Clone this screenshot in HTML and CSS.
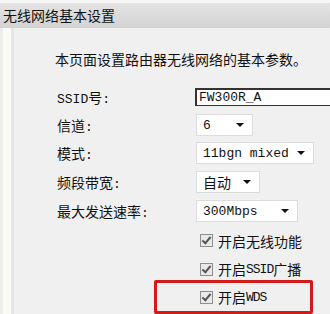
FILE: index.html
```html
<!DOCTYPE html>
<html lang="zh-CN">
<head>
    <meta charset="UTF-8">
    <title>无线网络基本设置</title>
    <link rel="stylesheet" href="styles.css">
</head>
<body>
    <div class="title">无线网络基本设置</div>

    <div class="panel">
        <div class="strip"></div>
        <div class="content">
            <p class="intro">本页面设置路由器无线网络的基本参数。</p>

            <div class="form">
                <label><span class="en">SSID</span>号<span class="en">:</span></label>
                <div><input class="text en" type="text" value="FW300R_A"></div>

                <label>信道<span class="en">:</span></label>
                <div><span class="select w-chan"><span class="en">6</span><i class="arrow"></i></span></div>

                <label>模式<span class="en">:</span></label>
                <div><span class="select w-mode"><span class="en">11bgn mixed</span><i class="arrow"></i></span></div>

                <label>频段带宽<span class="en">:</span></label>
                <div><span class="select w-band">自动<i class="arrow"></i></span></div>

                <label>最大发送速率<span class="en">:</span></label>
                <div><span class="select w-rate"><span class="en">300Mbps</span><i class="arrow"></i></span></div>

                <div class="check"><span class="box"></span>开启无线功能</div>
                <div class="check"><span class="box"></span>开启<span class="en narrow">SSID</span>广播</div>
                <div class="check"><span class="box"></span>开启<span class="en narrow">WDS</span></div>
            </div>
        </div>
    </div>

    <!-- 标注框 -->
    <div class="mark"></div>
</body>
</html>
```

FILE: styles.css
```css
body {
    margin: 0;
    width: 330px;
    height: 314px;
    overflow: hidden;
    position: relative;
    background: #f7f7f7;
    color: #111;
    font-family: "Noto Sans CJK SC", sans-serif;
    font-size: 14px;
}
.en {
    font-family: "Liberation Mono", monospace;
    font-size: 13px;
}
.title {
    margin-top: 3px;
    height: 25px;
    line-height: 25px;
    padding-left: 3px;
    background: linear-gradient(#e3e3e3, #d3d3d3);
}
.panel {
    display: flex;
    height: 286px;
}
.strip {
    flex: none;
    width: 14px;
    background: linear-gradient(to right, #ececec 0 3px, #fbfbf5 3px 11px, #e6e4ef 11px 14px);
}
.content {
    flex: 1;
    min-width: 0;
    background: #f0f0f0;
    padding-left: 41px;
}
.intro {
    margin: 21px 0 0;
    line-height: 20px;
    white-space: nowrap;
}
.form {
    display: grid;
    grid-template-columns: 140px 1fr;
    grid-template-rows: 29px 28px 28px 29px 30px 29px 28px 28px;
    margin-top: 13px;
    align-items: center;
}
.form label {
    padding-left: 2px;
}
.text {
    display: block;
    box-sizing: border-box;
    width: 150px;
    height: 18px;
    margin: 0;
    padding: 0 2px;
    border: 1px solid #333;
    border-width: 2px 1px 1px 2px;
    background: #fff;
    color: #111;
}
.select {
    display: flex;
    align-items: center;
    justify-content: space-between;
    box-sizing: border-box;
    height: 22px;
    margin-left: 1px;
    padding: 0 8px 0 6px;
    border: 1px solid #dcdcdc;
    background: #fff;
}
.w-chan { width: 57px; }
.w-mode { width: 118px; }
.w-band { width: 64px; }
.w-rate { width: 102px; }
.arrow {
    width: 0;
    height: 0;
    border-left: 4px solid transparent;
    border-right: 4px solid transparent;
    border-top: 4px solid #111;
}
.check {
    grid-column: 2;
    display: flex;
    align-items: center;
    padding-left: 5px;
}
.box {
    width: 11px;
    height: 11px;
    margin-right: 5px;
    border: 1px solid #8e8e8e;
    background: #e9e9e9;
    position: relative;
}
.box::after {
    content: "";
    position: absolute;
    left: 3px;
    top: 0;
    width: 3px;
    height: 7px;
    border: solid #555;
    border-width: 0 2px 2px 0;
    transform: rotate(40deg);
}
.narrow {
    letter-spacing: -1px;
}
.mark {
    position: absolute;
    left: 154px;
    top: 280px;
    width: 153px;
    height: 28px;
    border: 3px solid #d21a1a;
    border-radius: 2px;
}
```
